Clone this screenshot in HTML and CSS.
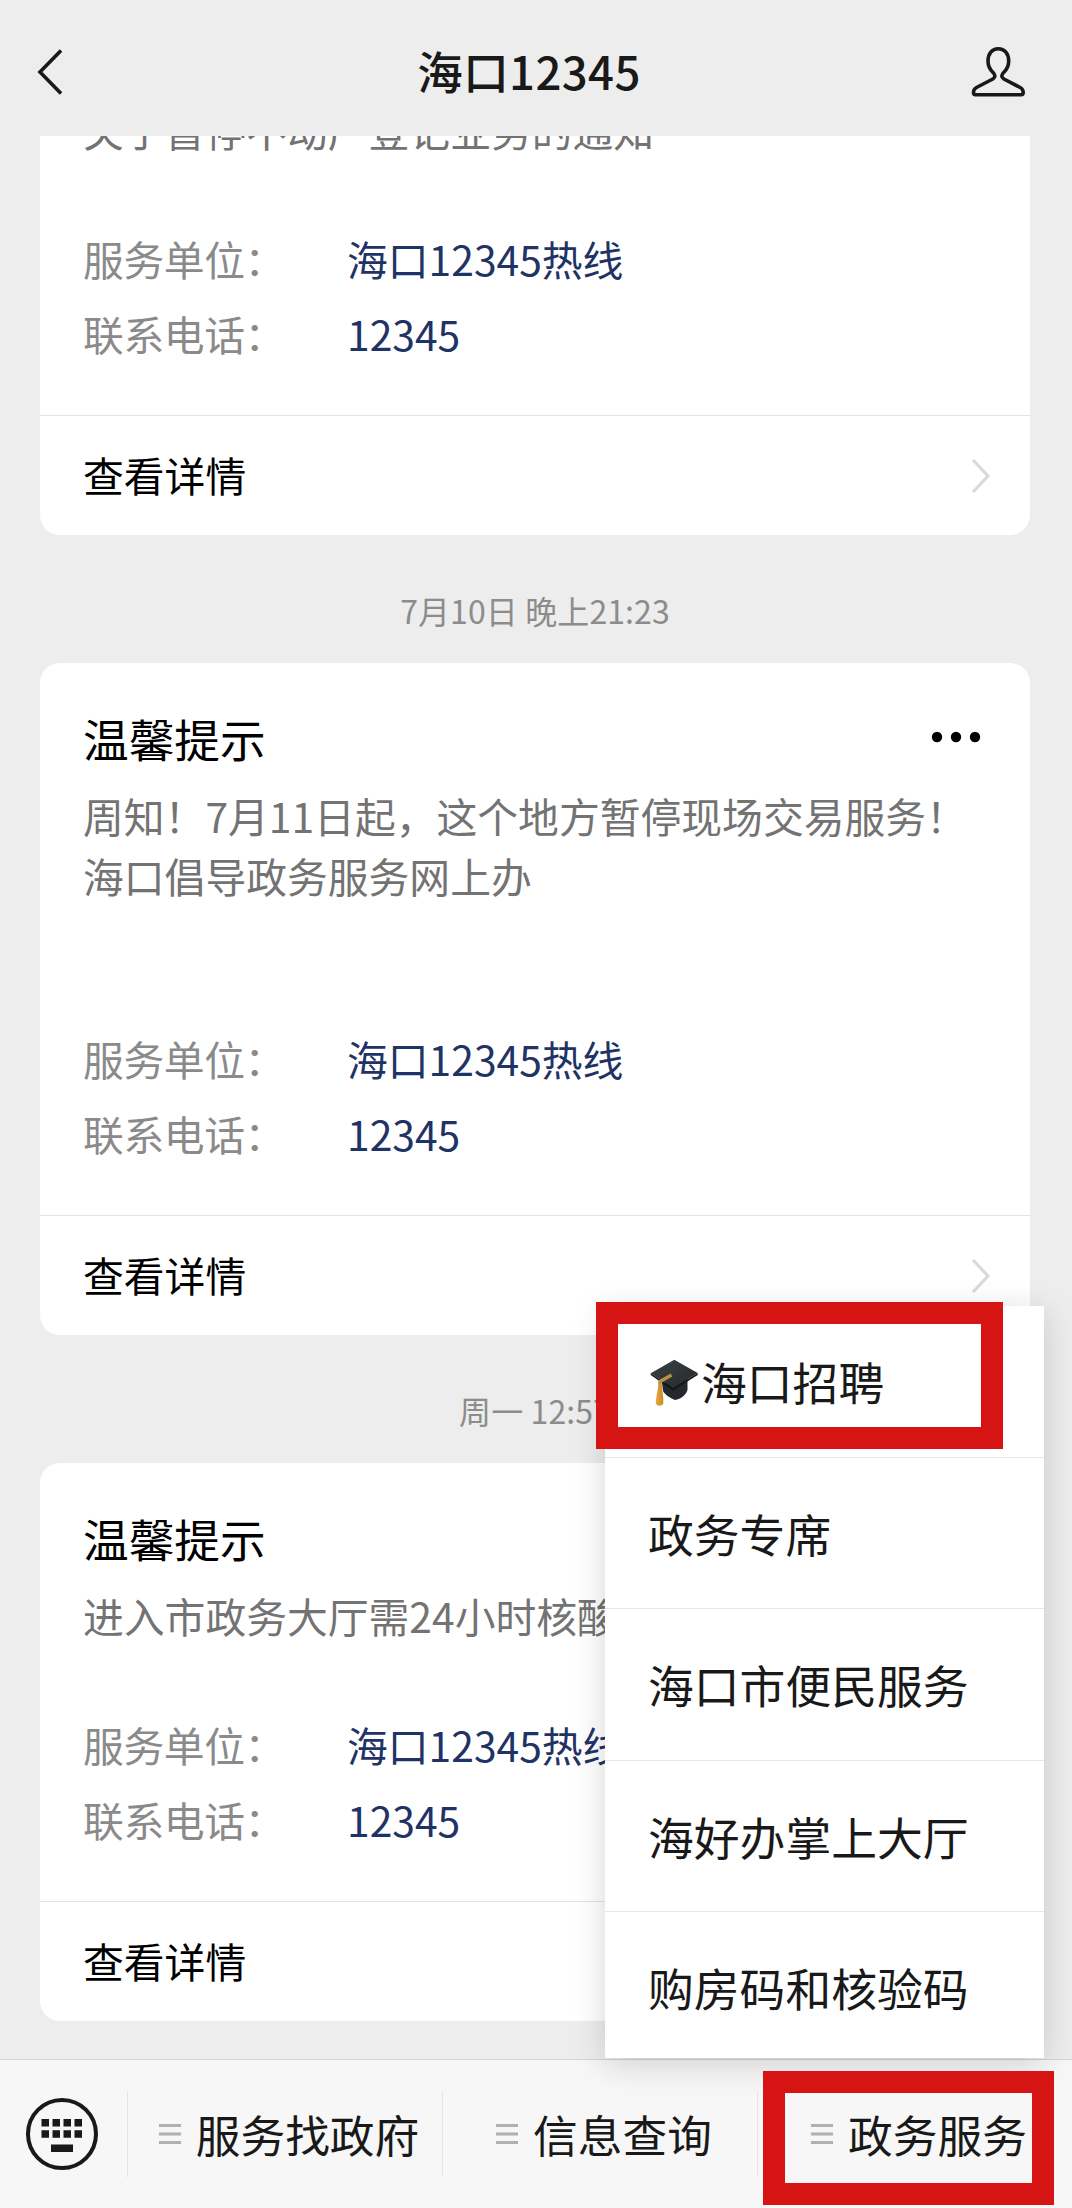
FILE: index.html
```html
<!DOCTYPE html>
<html lang="zh-CN">
<head>
<meta charset="utf-8">
<title>海口12345</title>
<link rel="stylesheet" href="styles.css">
</head>
<body>
<div class="app">
  <header class="header">
    <svg class="back" viewBox="0 0 28 48"><path d="M25 2.500L4 24l21 21.500"/></svg>
    <h1 class="title">海口12345</h1>
    <svg class="person" viewBox="11 9 56 54"><path d="M38.300 12.800c-6.300 0-10.300 5-10.300 12.200 0 5 2 8.500 4.800 11.300 2.600 2.600 3 4.600 0 6.700L16.500 51.500c-2.600 1.300-3 2.500-3 5 0 1.700.6 2.300 2 2.300h45.700c1.400 0 2-.6 2-2.300 0-2.500-.4-3.700-3-5L43.900 43c-3-2.100-2.600-4.100 0-6.700 2.800-2.800 4.800-6.300 4.800-11.300 0-7.200-4-12.200-10.400-12.200z"/></svg>
  </header>

  <main class="chat">
    <article class="card">
      <div class="card-main">
        <h2 class="card-title">温馨提示</h2>
        <p class="desc">关于暂停不动产登记业务的通知</p>
        <dl class="info">
          <dt>服务单位：</dt><dd>海口12345热线</dd>
          <dt>联系电话：</dt><dd>12345</dd>
        </dl>
      </div>
      <div class="card-foot"><span>查看详情</span><svg class="chev" viewBox="0 0 20 36"><path d="M2 2l15 16L2 34"/></svg></div>
    </article>

    <div class="time">7月10日 晚上21:23</div>

    <article class="card">
      <div class="card-main">
        <div class="card-head">
          <h2 class="card-title">温馨提示</h2>
          <svg class="dots" viewBox="0 0 50 12"><circle cx="6" cy="6" r="5.200"/><circle cx="25" cy="6" r="5.200"/><circle cx="44" cy="6" r="5.200"/></svg>
        </div>
        <p class="desc tall">周知！7月11日起，这个地方暂停现场交易服务！<br>海口倡导政务服务网上办</p>
        <dl class="info">
          <dt>服务单位：</dt><dd>海口12345热线</dd>
          <dt>联系电话：</dt><dd>12345</dd>
        </dl>
      </div>
      <div class="card-foot"><span>查看详情</span><svg class="chev" viewBox="0 0 20 36"><path d="M2 2l15 16L2 34"/></svg></div>
    </article>

    <div class="time">周一 12:57</div>

    <article class="card">
      <div class="card-main">
        <h2 class="card-title">温馨提示</h2>
        <p class="desc">进入市政务大厅需24小时核酸</p>
        <dl class="info">
          <dt>服务单位：</dt><dd>海口12345热线</dd>
          <dt>联系电话：</dt><dd>12345</dd>
        </dl>
      </div>
      <div class="card-foot"><span>查看详情</span></div>
    </article>
  </main>

  <nav class="bar">
    <div class="kb">
      <svg viewBox="0 0 74 74"><circle cx="37" cy="37" r="34"/><path d="M16.500 22h7.500v7.500h-7.500zM27.500 22h7.500v7.500h-7.500zM38.500 22h7.500v7.500h-7.500zM49.500 22h7.500v7.500h-7.500zM16.500 33.300h7.500v7.500h-7.500zM27.500 33.300h7.500v7.500h-7.500zM38.500 33.300h7.500v7.500h-7.500zM49.500 33.300h7.500v7.500h-7.500zM26 47.500h22v7.500h-22z"/></svg>
    </div>
    <div class="tab"><svg class="lines" viewBox="0 0 22 22"><path d="M0 2.500h22M0 11h22M0 19.500h22"/></svg><span>服务找政府</span></div>
    <div class="tab"><svg class="lines" viewBox="0 0 22 22"><path d="M0 2.500h22M0 11h22M0 19.500h22"/></svg><span>信息查询</span></div>
    <div class="tab"><svg class="lines" viewBox="0 0 22 22"><path d="M0 2.500h22M0 11h22M0 19.500h22"/></svg><span>政务服务</span></div>
  </nav>

  <ul class="menu">
    <li>
      <svg class="cap" viewBox="0 0 48 48">
        <defs>
          <linearGradient id="board" x1="0" y1="0" x2="1" y2="1"><stop offset="0" stop-color="#3a4240"/><stop offset="1" stop-color="#252a2c"/></linearGradient>
          <linearGradient id="tassel" x1="0" y1="0" x2="1" y2="0"><stop offset="0" stop-color="#eaa83c"/><stop offset="1" stop-color="#c98a2c"/></linearGradient>
        </defs>
        <path fill="#24272b" d="M12 24l1 8c2 4 7 7 12 9 6-1 11-5 12.500-10V19z"/>
        <path fill="url(#board)" d="M24.300.7L47.700 14 23 29 .7 14.200z"/>
        <path fill="#14171a" d="M.7 14.200L23 29l24.700-15v2L23 31.500.7 16z"/>
        <path fill="none" stroke="#b98f42" stroke-width="3.400" d="M21.500 16L10 22.500V30"/>
        <path fill="url(#tassel)" d="M8.500 26h3c1 6 2.200 13 1.800 18.500-1.500 3-6 3-7.600 0 .4-5.500 1.600-12.500 2.800-18.500z"/>
      </svg><span>海口招聘</span>
    </li>
    <li><span>政务专席</span></li>
    <li><span>海口市便民服务</span></li>
    <li><span>海好办掌上大厅</span></li>
    <li><span>购房码和核验码</span></li>
  </ul>

  <div class="mark mark-menu"></div>
  <div class="mark mark-tab"></div>
</div>
</body>
</html>
```
FILE: styles.css
```css
* { box-sizing: border-box; margin: 0; padding: 0; }
body {
  background: #ededed;
  font-family: "Noto Sans CJK SC", sans-serif;
  font-size: 40.800px;
  color: #000;
}
.app {
  position: relative;
  width: 1072px;
  height: 2208px;
  overflow: hidden;
  display: flex;
  flex-direction: column;
}
svg { display: block; }

.header {
  height: 136px;
  flex: none;
  background: #ededed;
  display: flex;
  align-items: center;
  justify-content: space-between;
  padding: 8px 45px 0 36px;
}
.back { width: 28px; height: 48px; fill: none; stroke: #191919; stroke-width: 3.600; }
.title { font-size: 45.500px; font-weight: 500; letter-spacing: .4px; color: #191919; line-height: 60px; margin: -4px 0 0 23px; }
.person { width: 56px; height: 54px; fill: none; stroke: #191919; stroke-width: 3.600; stroke-linejoin: round; }

/* The thread is scrolled to its end, so the oldest card runs under the header. */
.chat {
  flex: 1;
  min-height: 0;
  overflow: hidden;
  display: flex;
  flex-direction: column;
  justify-content: flex-end;
  padding: 0 42px 38px 40px;
}
.card { flex: none; background: #fff; border-radius: 20px; }
.card-main { padding: 42px 44px 44px 43px; }
.card-head { display: flex; justify-content: space-between; align-items: center; }
.card-title { font-size: 45.700px; font-weight: 400; line-height: 66px; }
.dots { width: 50px; height: 12px; margin: 0 5px 2px 0; }
.desc { margin-top: 15px; height: 121px; line-height: 60px; color: #737373; white-space: nowrap; }
.desc.tall { height: 235px; }
.info { display: grid; grid-template-columns: 264px 1fr; line-height: 75px; }
.info dt { color: #8a8a8a; white-space: nowrap; letter-spacing: -.4px; }
.info dd { color: #1f3366; white-space: nowrap; }
.card-foot {
  height: 120px;
  border-top: 1px solid #e2e2e2;
  display: flex;
  align-items: center;
  justify-content: space-between;
  padding: 0 39px 0 43px;
}
.card-foot span { margin-top: -2px; }
.chev { width: 20px; height: 36px; fill: none; stroke: #d8d8d8; stroke-width: 3; }
.time { flex: none; height: 128px; line-height: 150px; text-align: center; font-size: 32px; letter-spacing: .1px; color: #8c8c8c; }

.bar {
  height: 149px;
  flex: none;
  background: #f7f7f7;
  border-top: 1px solid #d3d3d3;
  display: flex;
  align-items: center;
  color: #191919;
  font-size: 44.700px;
}
.kb { width: 127px; padding-left: 25px; }
.kb svg { width: 74px; height: 74px; fill: #191919; }
.kb circle { fill: none; stroke: #191919; stroke-width: 4; }
.tab {
  flex: 1;
  height: 86px;
  border-left: 1px solid #e4e4e4;
  display: flex;
  align-items: center;
  justify-content: center;
  gap: 15px;
  padding-left: 8px;
  line-height: 66px;
}
.lines { width: 22px; height: 22px; stroke: #b0b0b0; stroke-width: 3; }

.menu {
  position: absolute;
  left: 605px;
  top: 1306px;
  width: 439px;
  height: 752px;
  background: #fff;
  list-style: none;
  box-shadow: 0 6px 32px rgba(0, 0, 0, .16);
  color: #191919;
  font-size: 45.800px;
}
.menu li {
  height: 151.500px;
  display: flex;
  align-items: center;
  padding-left: 43px;
  border-bottom: 1px solid #e6e6e6;
}
.menu li:last-child { border-bottom: 0; height: 149px; }
.cap { width: 48px; height: 48px; margin: 4px 3px 0 2px; }

.mark { position: absolute; border: 22px solid #d71414; }
.mark-menu { left: 596px; top: 1302px; width: 407px; height: 147px; }
.mark-tab { left: 763px; top: 2071px; width: 291px; height: 134px; }
```
